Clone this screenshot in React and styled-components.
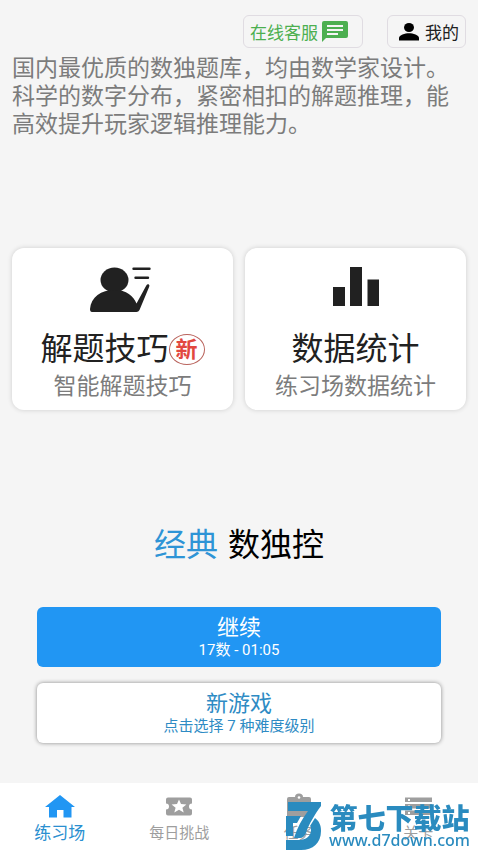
import styled, { createGlobalStyle } from 'styled-components';

const GlobalStyle = createGlobalStyle`
  * {
    box-sizing: border-box;
  }
  body {
    margin: 0;
    background: #f5f5f5;
    color: #212121;
    font-family: Roboto, "Noto Sans CJK SC", sans-serif;
  }
  button {
    font-family: inherit;
    color: inherit;
    cursor: pointer;
  }
`;

const Page = styled.div`
  min-height: 100vh;
  display: flex;
  flex-direction: column;
`;

const TopBar = styled.header`
  display: flex;
  justify-content: flex-end;
  gap: 24px;
  padding: 15px 12px 0;
`;

const TopButton = styled.button`
  display: flex;
  align-items: center;
  gap: ${({ $gap }) => $gap}px;
  height: 33px;
  padding: ${({ $padding }) => $padding};
  border: 1px solid #e0dce2;
  border-radius: 6px;
  background: transparent;
  color: ${({ $color }) => $color};
  font-size: 17px;
`;

const Intro = styled.p`
  margin: 7px 12px 0;
  color: #7c7c7c;
  font-size: 23px;
  line-height: 28px;
`;

const Cards = styled.div`
  display: grid;
  grid-template-columns: 1fr 1fr;
  gap: 12px;
  margin: 109px 12px 0;
`;

const Card = styled.button`
  display: flex;
  flex-direction: column;
  align-items: center;
  height: 162px;
  padding: 19px 0 0;
  border: 0;
  border-radius: 12px;
  background: #fff;
  box-shadow: 0 0 5px rgba(0, 0, 0, 0.16);
`;

const CardTitle = styled.span`
  display: flex;
  align-items: center;
  margin-top: 18px;
  font-size: 32px;
  line-height: 36px;
`;

const CardNote = styled.span`
  margin-top: 6px;
  color: #7c7c7c;
  font-size: 23px;
  line-height: 28px;
`;

const NewBadge = styled.span`
  width: 36px;
  height: 31px;
  border: 1px solid #b9635c;
  border-radius: 50%;
  color: #e2483f;
  font-size: 22px;
  font-weight: 700;
  line-height: 29px;
  text-align: center;
`;

const Heading = styled.h1`
  display: flex;
  justify-content: center;
  gap: 10px;
  margin: 115px 0 0;
  color: #000;
  font-size: 32px;
  font-weight: 400;
  line-height: 40px;
`;

const Accent = styled.span`
  color: #2e94d6;
`;

const Actions = styled.div`
  display: flex;
  flex-direction: column;
  gap: 16px;
  margin: 42px 37px 24px;
`;

const ActionButton = styled.button`
  display: flex;
  flex-direction: column;
  align-items: center;
  justify-content: center;
  height: 60px;
  padding: 2px 0 0;
  border: 0;
  border-radius: 6px;
  background: ${({ $primary }) => ($primary ? '#2196f3' : '#fff')};
  color: ${({ $primary }) => ($primary ? '#fff' : '#2e8bc4')};
  box-shadow: ${({ $primary }) => ($primary ? 'none' : '0 0 4px rgba(0, 0, 0, 0.45)')};
`;

const ActionTitle = styled.span`
  font-size: 22px;
  line-height: 24px;
`;

const ActionNote = styled.span`
  font-size: 15px;
  line-height: 20px;
`;

const TabBar = styled.nav`
  display: grid;
  grid-template-columns: repeat(4, 1fr);
  margin-top: auto;
  height: 67px;
  background: #fff;
`;

const Tab = styled.a`
  display: flex;
  flex-direction: column;
  align-items: center;
  padding-top: 10px;
  color: ${({ $active }) => ($active ? '#2a8fd0' : '#9e9e9e')};
  font-size: ${({ $active }) => ($active ? 17 : 15)}px;
  line-height: 28px;
  text-decoration: none;
`;

const Watermark = styled.div`
  position: fixed;
  right: 8px;
  bottom: 0;
  display: flex;
  align-items: flex-end;
  gap: 8px;
  color: #2a8bbf;
  pointer-events: none;
`;

const WatermarkText = styled.div`
  display: flex;
  flex-direction: column;
  align-items: center;
`;

const WatermarkName = styled.strong`
  font-family: "Noto Sans CJK SC", sans-serif;
  font-size: 28px;
  font-weight: 900;
  line-height: 26px;
`;

const WatermarkUrl = styled.span`
  font-family: "Noto Sans", sans-serif;
  font-size: 16px;
  font-weight: 500;
  line-height: 20px;
`;

function ChatIcon() {
  return (
    <svg width="26" height="21" viewBox="0 0 26 21" aria-hidden="true">
      <path fill="#4caf50" d="M2 0h22a2 2 0 0 1 2 2v13a2 2 0 0 1-2 2H4l-4 4V2a2 2 0 0 1 2-2z" />
      <path stroke="#f5f5f5" strokeWidth="2" d="M5 5h16M5 9h16M5 13h11" />
    </svg>
  );
}

function PersonIcon() {
  return (
    <svg width="20" height="18" viewBox="0 0 20 18" aria-hidden="true">
      <ellipse cx="10" cy="4.5" rx="5" ry="4.5" />
      <path d="M0 17.5v-2.500c0-3 6-4.800 10-4.800s10 1.800 10 4.800v2.500z" />
    </svg>
  );
}

function TeacherIcon() {
  return (
    <svg width="66" height="46" viewBox="0 0 66 46" fill="#212121" aria-hidden="true">
      <ellipse cx="24.5" cy="13" rx="14" ry="12.500" />
      <path d="M2 45q-2 0-2-3C1 30 11 23 24.500 23c12 0 19 6 22 13.500L56.300 18.500q1-1.800 2.300-1.200t.6 2.400L49.500 43q-1 2-3 2z" />
      <path stroke="#212121" strokeWidth="2.4" strokeLinecap="round" d="M43.500 1.700h16M45.500 10.700h12.500" />
    </svg>
  );
}

function ChartIcon() {
  return (
    <svg width="46" height="46" viewBox="0 0 46 46" fill="#212121" aria-hidden="true">
      <path d="M0 20h12v19H0zM17 0h12v39H17zM34.500 12.500H46V39H34.500z" />
    </svg>
  );
}

function HomeIcon() {
  return (
    <svg width="30" height="26" viewBox="0 0 30 26" aria-hidden="true">
      <path fill="#2196f3" d="M15 2L30 14h-3.500V24.500h-8V17h-6.500v7.500H4V14H0z" />
    </svg>
  );
}

function TicketIcon() {
  return (
    <svg width="26" height="26" viewBox="0 0 26 26" aria-hidden="true">
      <path fill="#9e9e9e" d="M2 4.500h22a2 2 0 0 1 2 2v4a3 3 0 0 0 0 6v4a2 2 0 0 1-2 2H2a2 2 0 0 1-2-2v-4a3 3 0 0 0 0-6v-4a2 2 0 0 1 2-2z" />
      <path fill="#fff" d="M13 6.500l2 4.500 5.400.4-4 3.300 1.300 4.700-4.700-2.600-4.700 2.600 1.300-4.700-4-3.300 5.400-.4z" />
    </svg>
  );
}

function ClipboardIcon() {
  return (
    <svg width="24" height="26" viewBox="0 0 24 26" aria-hidden="true">
      <path fill="#9e9e9e" d="M2 4h6a4 3.500 0 0 1 8 0h6a2 2 0 0 1 2 2v18H0V6a2 2 0 0 1 2-2z" />
      <circle cx="12" cy="4.500" r="1.300" fill="#fff" />
    </svg>
  );
}

function ListIcon() {
  return (
    <svg width="27" height="26" viewBox="0 0 27 26" aria-hidden="true">
      <path fill="#9e9e9e" d="M0 4.500h27v4.500H0zM0 11h27v4.500H0zM0 17.500h27V22H0z" />
      <path fill="#fff" d="M3 6h2v2H3zM3 12.500h2v2H3zM3 19h2v2H3z" />
    </svg>
  );
}

function SiteLogo() {
  return (
    <svg width="35" height="48" viewBox="0 0 35 48" fill="#2a8bbf" aria-hidden="true">
      <path d="M2 0h33v4C29 12 23 22 20 31q-2 5-6 5H8C11 26 16 17 22 9H2z" />
      <path d="M0 14h15l-4 7H7v13H0z" />
      <path d="M29 16c4 3 6 7 6 13 0 12-8 19-20 19H0V38h13c7 0 12-4 12-10 0-2 0-3-1-4z" />
    </svg>
  );
}

const tabs = [
  { label: '练习场', icon: <HomeIcon />, active: true },
  { label: '每日挑战', icon: <TicketIcon /> },
  { label: '任务', icon: <ClipboardIcon /> },
  { label: '关卡', icon: <ListIcon /> },
];

export default function App() {
  return (
    <Page>
      <GlobalStyle />
      <TopBar>
        <TopButton $color="#4caf50" $gap={4} $padding="0 14px 0 6px">
          在线客服
          <ChatIcon />
        </TopButton>
        <TopButton $color="#212121" $gap={6} $padding="0 6px 0 11px">
          <PersonIcon />
          我的
        </TopButton>
      </TopBar>

      <main>
        <Intro>
          国内最优质的数独题库，均由数学家设计。
          科学的数字分布，紧密相扣的解题推理，能高效提升玩家逻辑推理能力。
        </Intro>

        <Cards>
          <Card>
            <TeacherIcon />
            <CardTitle>
              解题技巧
              <NewBadge>新</NewBadge>
            </CardTitle>
            <CardNote>智能解题技巧</CardNote>
          </Card>
          <Card>
            <ChartIcon />
            <CardTitle>数据统计</CardTitle>
            <CardNote>练习场数据统计</CardNote>
          </Card>
        </Cards>

        <Heading>
          <Accent>经典</Accent>
          <span>数独控</span>
        </Heading>

        <Actions>
          <ActionButton $primary>
            <ActionTitle>继续</ActionTitle>
            <ActionNote>17数 - 01:05</ActionNote>
          </ActionButton>
          <ActionButton>
            <ActionTitle>新游戏</ActionTitle>
            <ActionNote>点击选择 7 种难度级别</ActionNote>
          </ActionButton>
        </Actions>
      </main>

      <TabBar>
        {tabs.map(({ label, icon, active }) => (
          <Tab key={label} href="#" $active={active}>
            {icon}
            {label}
          </Tab>
        ))}
      </TabBar>

      <Watermark>
        <SiteLogo />
        <WatermarkText>
          <WatermarkName>第七下载站</WatermarkName>
          <WatermarkUrl>www.d7down.com</WatermarkUrl>
        </WatermarkText>
      </Watermark>
    </Page>
  );
}
